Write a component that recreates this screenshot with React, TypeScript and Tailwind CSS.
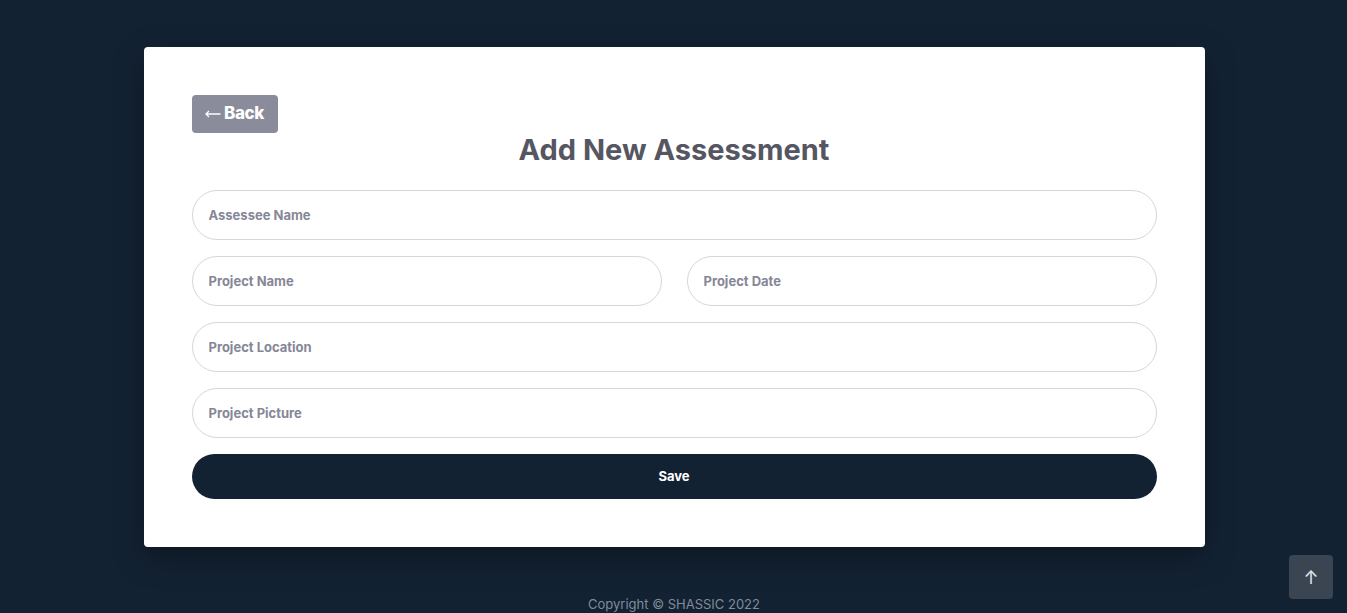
export default function App() {
  const field =
    "w-full h-[50px] rounded-full border border-[#d6d6dc] bg-white px-4 text-[13px] font-bold text-[#4b4c57] placeholder:text-[#868796] focus:outline-none";
  return (
    <div className="min-h-[613px] bg-[#132233] flex flex-col items-center pl-px font-['Inter',sans-serif] relative">
      <div className="mt-[47px] w-[1061px] bg-white rounded-[4px] px-12 pt-12 pb-12 shadow-[0_10px_30px_rgba(0,0,0,0.35)]">
        <button className="h-[38px] w-[86px] rounded-[4px] bg-[#8a8b9b] text-white text-[17px] font-extrabold flex items-center justify-center gap-[3px] tracking-tight">
          <svg width="16" height="8" viewBox="0 0 16 8" fill="none" stroke="white" strokeWidth="1.3">
            <path d="M15.5 4H1M4 1L1 4l3 3" />
          </svg>
          Back
        </button>
        <h1 className="-mt-[2px] text-center text-[29px] leading-[38px] font-bold text-[#555662] mb-[21px]">
          Add New Assessment
        </h1>
        <div className="flex flex-col gap-4">
          <input className={field} placeholder="Assessee Name" />
          <div className="flex gap-[25px]">
            <input className={field} placeholder="Project Name" />
            <input className={field} placeholder="Project Date" />
          </div>
          <input className={field} placeholder="Project Location" />
          <input className={field} placeholder="Project Picture" />
          <button className="h-[45px] w-full rounded-full bg-[#132233] text-white text-[13px] font-bold">
            Save
          </button>
        </div>
      </div>
      <div className="mt-[48px] text-[13px] text-[#7f8b99]">Copyright © SHASSIC 2022</div>
      <button className="absolute right-[14px] top-[555px] h-[44px] w-[44px] rounded-[4px] bg-[#3b4552] text-[#dfe3e8] text-[18px] flex items-center justify-center">
        ↑
      </button>
    </div>
  );
}
